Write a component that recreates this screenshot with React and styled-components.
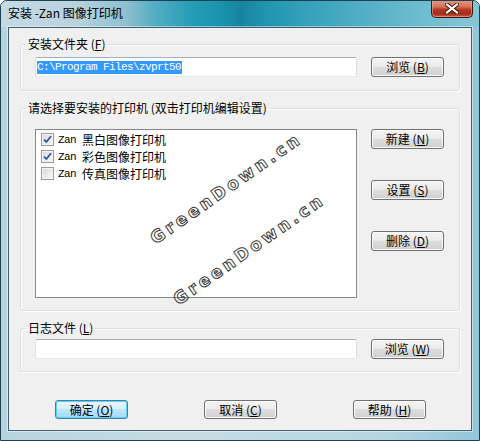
import React from "react";
import styled, { createGlobalStyle, css } from "styled-components";

const CJK = `"Noto Sans CJK SC", "Noto Sans CJK JP", "DejaVu Sans", sans-serif`;
const MONO = `"Liberation Mono", "DejaVu Sans Mono", monospace`;

const GlobalStyle = createGlobalStyle`
  html, body {
    margin: 0;
    padding: 0;
    background: #ffffff;
  }
  body {
    font-family: ${CJK};
    font-size: 12px;
    color: #000000;
  }
`;

const Window = styled.div`
  position: relative;
  width: 480px;
  height: 441px;
  box-sizing: border-box;
  display: flex;
  flex-direction: column;
  border: 1px solid #1f4050;
  border-radius: 7px 7px 0 0;
  overflow: hidden;
  background: linear-gradient(90deg, #b9d3de 0%, #c6dce5 40%, #b6d5e1 80%, #92c6d8 100%);
`;

const TitleBar = styled.div`
  height: 26px;
  flex: none;
  display: flex;
  align-items: flex-start;
  justify-content: space-between;
  padding: 0 6px 0 7px;
  background: linear-gradient(
    90deg,
    #c6dae3 0%,
    #b8d2dd 16%,
    #8fc0d0 26%,
    #55adc3 32%,
    #249db7 40%,
    #1a93ae 46%,
    #15859f 50%,
    #2197b2 56%,
    #3aa3bc 66%,
    #58b1c6 78%,
    #6fbccf 88%,
    #86c6d6 100%
  );
`;

const TitleText = styled.div`
  margin-top: 5px;
  font-family: ${CJK};
  font-size: 12px;
  line-height: 14px;
  color: #000000;
  white-space: nowrap;
`;

const CloseButton = styled.div`
  width: 42px;
  height: 18px;
  margin-top: -1px;
  box-sizing: border-box;
  display: flex;
  align-items: center;
  justify-content: center;
  border: 1px solid #40160d;
  border-top: none;
  border-radius: 0 0 5px 5px;
  background: linear-gradient(180deg, #e59a86 0%, #d4725b 40%, #b73a22 55%, #a32d1a 80%, #c65c44 100%);
  box-shadow: inset 0 0 0 1px rgba(255, 200, 185, 0.45);
`;

const Client = styled.div`
  flex: 1;
  margin: 0 7px 9px 7px;
  border: 1px solid #3d6272;
  background: #f0f0f0;
  padding: 9px 11px 0 11px;
  display: flex;
  flex-direction: column;
  box-shadow: 0 0 0 1px rgba(255, 255, 255, 0.45);
`;

const Group = styled.fieldset`
  margin: ${(p) => p.$mt || 0}px 0 0 0;
  padding: ${(p) => p.$pt}px 14px ${(p) => p.$pb}px 14px;
  border: 1px solid #d5dfe5;
  border-radius: 3px;
  box-shadow: inset 1px 1px 0 #ffffff, 1px 1px 0 #ffffff;
  min-width: 0;
`;

const Legend = styled.legend`
  margin-left: -9px;
  padding: 0 2px;
  font-family: ${CJK};
  font-size: 12px;
  line-height: 14px;
  height: 14px;
  white-space: nowrap;
`;

const Key = styled.span`
  text-decoration: underline;
`;

const FieldRow = styled.div`
  display: flex;
  align-items: ${(p) => (p.$top ? "flex-start" : "center")};
  gap: 14px;
`;

const TextBox = styled.div`
  width: 322px;
  height: 20px;
  box-sizing: border-box;
  display: flex;
  align-items: center;
  padding-left: 1px;
  background: #ffffff;
  border: 1px solid;
  border-color: #abadb3 #dbdfe6 #e3e9ef #e2e3ea;
  border-radius: 2px;
`;

const Selected = styled.span`
  background: #3399ff;
  color: #ffffff;
  font-family: ${MONO};
  font-size: 11px;
  letter-spacing: -0.6px;
  line-height: 13px;
  height: 13px;
  padding-right: 0.6px;
  white-space: pre;
`;

const ListBox = styled.div`
  width: 322px;
  height: 169px;
  box-sizing: border-box;
  padding: 1px 0 0 5px;
  background: #ffffff;
  border: 1px solid #828790;
`;

const Item = styled.div`
  height: 17px;
  display: flex;
  align-items: center;
  white-space: nowrap;
`;

const CheckBox = styled.span`
  width: 13px;
  height: 13px;
  margin-right: 4px;
  box-sizing: border-box;
  display: flex;
  align-items: center;
  justify-content: center;
  border: 1px solid #9c9c9c;
  background: linear-gradient(135deg, #d6d6d6 0%, #eeeeee 60%, #fafafa 100%);
  box-shadow: inset 0 0 0 1px #f4f4f4;
`;

const ItemCode = styled.span`
  font-family: ${MONO};
  font-size: 11px;
  letter-spacing: -0.6px;
  white-space: pre;
`;

const ItemName = styled.span`
  font-family: ${CJK};
  font-size: 12px;
`;

const ButtonColumn = styled.div`
  display: flex;
  flex-direction: column;
  gap: 31px;
`;

const Button = styled.div`
  width: 73px;
  height: ${(p) => p.$h || 20}px;
  box-sizing: border-box;
  display: flex;
  align-items: center;
  justify-content: center;
  border: 1px solid #707070;
  border-radius: 3px;
  background: linear-gradient(180deg, #f3f3f3 0%, #ececec 46%, #dddddd 50%, #d0d0d0 100%);
  box-shadow: inset 0 0 0 1px rgba(255, 255, 255, 0.85);
  font-family: ${CJK};
  font-size: 12px;
  line-height: 14px;
  white-space: nowrap;
  ${(p) =>
    p.$default &&
    css`
      border-color: #3c7fb1;
      background: linear-gradient(180deg, #eaf6fd 0%, #d9f0fc 46%, #bee6fd 50%, #a7d9f5 100%);
      box-shadow: inset 0 0 0 1px #5fd0f5;
    `}
`;

const ButtonRow = styled.div`
  display: flex;
  gap: 76px;
  margin-top: 28px;
  padding-left: 35px;
`;

const Watermark = styled.span`
  position: absolute;
  left: ${(p) => p.$x}px;
  top: ${(p) => p.$y}px;
  font-family: "DejaVu Sans", sans-serif;
  font-weight: bold;
  font-size: 17px;
  line-height: 18px;
  letter-spacing: 3.4px;
  color: transparent;
  -webkit-text-stroke: 1px #3c3c3c;
  transform: rotate(-35deg);
  transform-origin: 0 14px;
  white-space: nowrap;
  pointer-events: none;
`;

const Check = () => (
  <svg width="9" height="9" viewBox="0 0 9 9">
    <path d="M1 4.6 L3.4 7 L8 1.2" fill="none" stroke="#2d56a8" strokeWidth="1.8" />
  </svg>
);

const CloseGlyph = () => (
  <svg width="14" height="11" viewBox="0 0 14 11">
    <path d="M2 1.5 L12 9.5 M12 1.5 L2 9.5" stroke="#3a1208" strokeWidth="4" strokeLinecap="square" />
    <path d="M2 1.5 L12 9.5 M12 1.5 L2 9.5" stroke="#ffffff" strokeWidth="2.2" strokeLinecap="square" />
  </svg>
);

const printers = [
  { name: "黑白图像打印机", checked: true },
  { name: "彩色图像打印机", checked: true },
  { name: "传真图像打印机", checked: false },
];

export default function App() {
  return (
    <>
      <GlobalStyle />
      <Window>
        <TitleBar>
          <TitleText>安装 -Zan 图像打印机</TitleText>
          <CloseButton>
            <CloseGlyph />
          </CloseButton>
        </TitleBar>
        <Client>
          <Group $pt={6} $pb={13}>
            <Legend>
              安装文件夹 (<Key>F</Key>)
            </Legend>
            <FieldRow>
              <TextBox>
                <Selected>C:\Program Files\zvprt50</Selected>
              </TextBox>
              <Button>
                浏览 (<Key>B</Key>)
              </Button>
            </FieldRow>
          </Group>

          <Group $mt={10} $pt={14} $pb={12}>
            <Legend>请选择要安装的打印机 (双击打印机编辑设置)</Legend>
            <FieldRow $top>
              <ListBox>
                {printers.map((p) => (
                  <Item key={p.name}>
                    <CheckBox>{p.checked && <Check />}</CheckBox>
                    <ItemCode>Zan </ItemCode>
                    <ItemName>{p.name}</ItemName>
                  </Item>
                ))}
              </ListBox>
              <ButtonColumn>
                <Button>
                  新建 (<Key>N</Key>)
                </Button>
                <Button>
                  设置 (<Key>S</Key>)
                </Button>
                <Button>
                  删除 (<Key>D</Key>)
                </Button>
              </ButtonColumn>
            </FieldRow>
          </Group>

          <Group $mt={10} $pt={4} $pb={12}>
            <Legend>
              日志文件 (<Key>L</Key>)
            </Legend>
            <FieldRow>
              <TextBox />
              <Button>
                浏览 (<Key>W</Key>)
              </Button>
            </FieldRow>
          </Group>

          <ButtonRow>
            <Button $default $h={19}>
              确定 (<Key>O</Key>)
            </Button>
            <Button $h={19}>
              取消 (<Key>C</Key>)
            </Button>
            <Button $h={19}>
              帮助 (<Key>H</Key>)
            </Button>
          </ButtonRow>
        </Client>

        <Watermark $x={154} $y={229}>GreenDown.cn</Watermark>
        <Watermark $x={177} $y={290}>GreenDown.cn</Watermark>
      </Window>
    </>
  );
}
